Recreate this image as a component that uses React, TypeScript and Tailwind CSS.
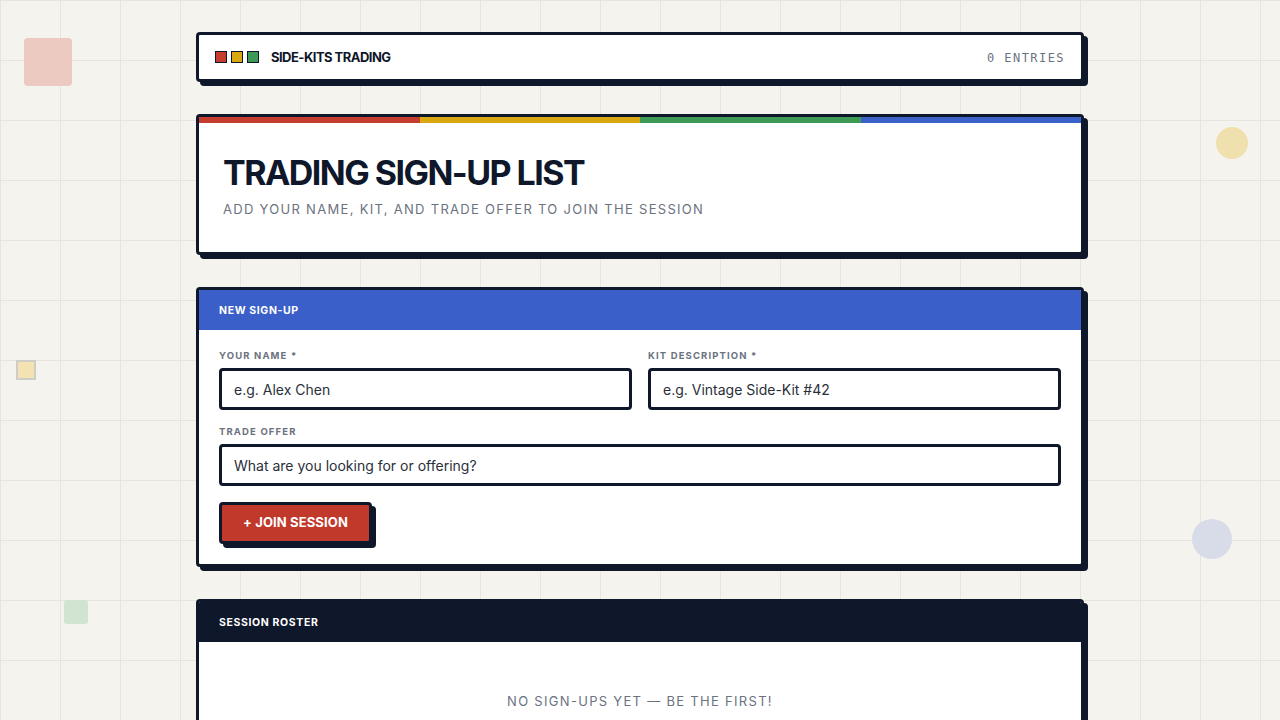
import React, { useState } from 'react';

const font = { fontFamily: 'Inter, "Noto Sans", sans-serif' };

const Field: React.FC<{ label: string; placeholder: string; value: string; onChange: (v: string) => void }> = ({
    label,
    placeholder,
    value,
    onChange,
}) => (
    <label className="flex flex-col">
        <span className="text-[9.5px] font-bold tracking-[0.12em] text-[#6b7280] mb-[6px] leading-[12px]">{label}</span>
        <input
            type="text"
            placeholder={placeholder}
            value={value}
            onChange={(e) => onChange(e.target.value)}
            className="h-[42px] w-full border-[3px] border-[#0f172a] rounded-[4px] px-[12px] text-[14px] text-[#0f172a] placeholder:text-[#2a2f3a] outline-none bg-white"
        />
    </label>
);

export default function App() {
    const [name, setName] = useState('');
    const [kit, setKit] = useState('');
    const [offer, setOffer] = useState('');

    return (
        <div
            className="relative min-h-screen overflow-hidden bg-[#f5f3ee] bg-[linear-gradient(to_right,#e7e4dd_1px,transparent_1px),linear-gradient(to_bottom,#e7e4dd_1px,transparent_1px)] bg-[size:60px_60px]"
            style={font}
        >
            {/* decorations */}
            <div className="absolute left-[24px] top-[38px] w-[48px] h-[48px] rounded-[4px] bg-[#ecc9c1]" />
            <div className="absolute left-[16px] top-[360px] w-[20px] h-[20px] border-[2px] border-[#cfcdc7] bg-[#f4e2b2]" />
            <div className="absolute left-[64px] top-[600px] w-[24px] h-[24px] rounded-[3px] bg-[#d0e4d1]" />
            <div className="absolute left-[1216px] top-[127px] w-[32px] h-[32px] rounded-full bg-[#efe0ae]" />
            <div className="absolute left-[1192px] top-[519px] w-[40px] h-[40px] rounded-full bg-[#d8dce9]" />

            <div className="relative mx-auto w-[888px] pt-[32px] pb-[40px] flex flex-col gap-[32px]">
                {/* top bar */}
                <header className="h-[50px] bg-white border-[3px] border-[#0f172a] rounded-[4px] shadow-[4px_4px_0_#0f172a] flex items-center justify-between px-[16px]">
                    <div className="flex items-center">
                        <div className="flex gap-[4px]">
                            <span className="w-[12px] h-[12px] bg-[#c53d2f] border border-[#0f172a]" />
                            <span className="w-[12px] h-[12px] bg-[#d9a810] border border-[#0f172a]" />
                            <span className="w-[12px] h-[12px] bg-[#3d9a55] border border-[#0f172a]" />
                        </div>
                        <span className="ml-[12px] text-[13px] font-bold tracking-[-0.04em] text-[#0f172a] mt-[1px]">SIDE-KITS TRADING</span>
                    </div>
                    <span
                        className="text-[12px] tracking-[0.12em] text-[#6b7280] mt-[1px]"
                        style={{ fontFamily: '"DejaVu Sans Mono", "Liberation Mono", monospace' }}
                    >
                        0 ENTRIES
                    </span>
                </header>

                {/* hero */}
                <section className="bg-white border-[3px] border-[#0f172a] rounded-[4px] shadow-[4px_4px_0_#0f172a] overflow-hidden">
                    <div className="flex h-[6px]">
                        <div className="flex-1 bg-[#c53d2f]" />
                        <div className="flex-1 bg-[#d9a810]" />
                        <div className="flex-1 bg-[#3d9a55]" />
                        <div className="flex-1 bg-[#3b62c8]" />
                    </div>
                    <div className="px-[24px] pt-[30px] pb-[34px]">
                        <h1 className="text-[34px] leading-[40px] font-bold tracking-[-0.045em] text-[#0f172a]">
                            TRADING SIGN-UP LIST
                        </h1>
                        <p className="mt-[7px] text-[13px] leading-[18px] tracking-[0.1em] text-[#6b7280]">
                            ADD YOUR NAME, KIT, AND TRADE OFFER TO JOIN THE SESSION
                        </p>
                    </div>
                </section>

                {/* form */}
                <section className="bg-white border-[3px] border-[#0f172a] rounded-[4px] shadow-[4px_4px_0_#0f172a] overflow-hidden">
                    <div className="h-[40px] bg-[#3b5fc9] flex items-center px-[20px]">
                        <span className="text-[10.5px] font-bold tracking-[0.06em] text-white mt-[1px]">NEW SIGN-UP</span>
                    </div>
                    <form
                        className="px-[20px] pt-[20px] pb-[20px] flex flex-col gap-[16px]"
                        onSubmit={(e) => e.preventDefault()}
                    >
                        <div className="grid grid-cols-2 gap-[16px]">
                            <Field label="YOUR NAME *" placeholder="e.g. Alex Chen" value={name} onChange={setName} />
                            <Field label="KIT DESCRIPTION *" placeholder="e.g. Vintage Side-Kit #42" value={kit} onChange={setKit} />
                        </div>
                        <Field label="TRADE OFFER" placeholder="What are you looking for or offering?" value={offer} onChange={setOffer} />
                        <div>
                            <button
                                type="submit"
                                className="h-[42px] px-[21px] bg-[#c0392b] border-[3px] border-[#0f172a] rounded-[4px] shadow-[4px_4px_0_#0f172a] text-white text-[13px] font-bold tracking-[0.01em]"
                            >
                                + JOIN SESSION
                            </button>
                        </div>
                    </form>
                </section>

                {/* roster */}
                <section className="bg-white border-[3px] border-[#0f172a] rounded-[4px] shadow-[4px_4px_0_#0f172a] overflow-hidden">
                    <div className="h-[40px] bg-[#0f172a] flex items-center px-[20px]">
                        <span className="text-[10.5px] font-bold tracking-[0.06em] text-white mt-[2px]">SESSION ROSTER</span>
                    </div>
                    <div className="py-[50px] text-center text-[13px] tracking-[0.1em] text-[#6b7280]">
                        NO SIGN-UPS YET — BE THE FIRST!
                    </div>
                </section>
            </div>
        </div>
    );
}
